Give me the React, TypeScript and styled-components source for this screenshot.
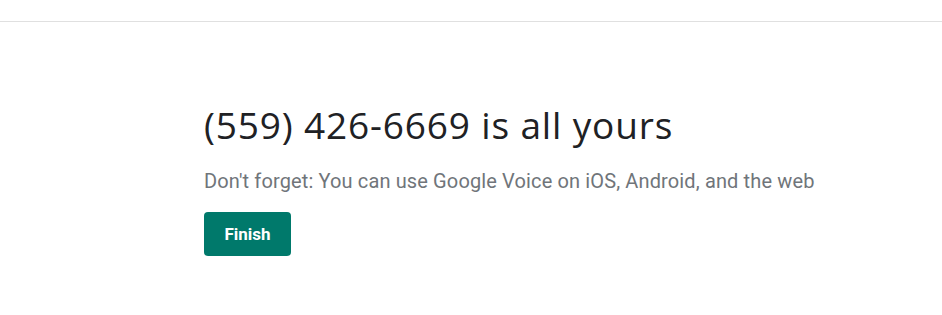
import React from 'react';
import styled, { createGlobalStyle } from 'styled-components';

const GlobalStyle = createGlobalStyle`
  html, body {
    margin: 0;
    padding: 0;
    background: #ffffff;
  }
  body {
    font-family: Roboto, "Liberation Sans", Arial, sans-serif;
  }
`;

const TopBar = styled.header`
  height: 21px;
  border-bottom: 1px solid #e0e0e0;
`;

const Content = styled.main`
  padding: 79px 0 0 204px;
`;

const Title = styled.h1`
  margin: 0;
  font-family: "Open Sans", Roboto, sans-serif;
  font-weight: 400;
  font-size: 37px;
  line-height: 48px;
  letter-spacing: 0.85px;
  color: #202124;
`;

const Subtitle = styled.p`
  margin: 20px 0 0;
  font-size: 20px;
  line-height: 24px;
  letter-spacing: 0.13px;
  color: #70757a;
`;

const FinishButton = styled.button`
  display: block;
  margin-top: 19px;
  width: 87px;
  height: 44px;
  padding: 0;
  border: none;
  border-radius: 4px;
  background: #00796b;
  color: #ffffff;
  font-family: Roboto, sans-serif;
  font-size: 17px;
  font-weight: 700;
  cursor: pointer;
`;

export default function App() {
  return (
    <>
      <GlobalStyle />
      <TopBar />
      <Content>
        <Title>(559) 426-6669 is all yours</Title>
        <Subtitle>
          Don&apos;t forget: You can use Google Voice on iOS, Android, and the web
        </Subtitle>
        <FinishButton>Finish</FinishButton>
      </Content>
    </>
  );
}
